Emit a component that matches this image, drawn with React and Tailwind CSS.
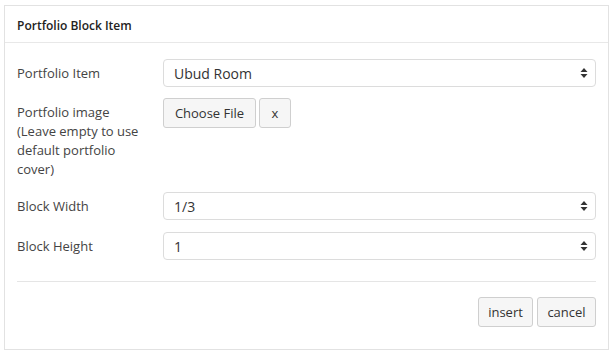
import React from "react";

const Arrows = () => (
    <svg width="8" height="12" viewBox="0 0 8 12" className="absolute right-[7px] top-1/2 -translate-y-1/2">
        <path d="M4 1 L7.5 5 L0.5 5 Z" fill="#333" />
        <path d="M4 11 L7.5 7 L0.5 7 Z" fill="#333" />
    </svg>
);

const SelectBox = ({ value }) => (
    <div className="relative flex-1 h-[28px] rounded-[4px] border border-[#dcdcdc] bg-white flex items-center pl-[10px] text-[14px] text-[#333]">
        {value}
        <Arrows />
    </div>
);

const Btn = ({ children, className = "" }) => (
    <button className={"h-[30px] pt-[1px] rounded-[3px] border border-[#cfcfcf] bg-[#f6f6f6] text-[13px] text-[#333] " + className}>
        {children}
    </button>
);

export default function App() {
    return (
        <div className="w-[613px] h-[355px] bg-white pt-[5px] pl-[4px]" style={{ fontFamily: '"Open Sans", sans-serif' }}>
            <div className="w-[605px] h-[345px] border border-[#e2e2e2]">
                {/* header */}
                <div className="h-[37px] border-b border-[#e8e8e8] flex items-center pt-[3px] px-[12px] text-[12px] font-semibold text-[#222]">
                    Portfolio Block Item
                </div>

                <div className="px-[12px] pt-[16px] text-[13px] text-[#444]">
                    <div className="flex items-center">
                        <div className="w-[146px] pt-[1px]">Portfolio Item</div>
                        <SelectBox value="Ubud Room" />
                    </div>

                    <div className="flex mt-[11px]">
                        <div className="w-[146px] pt-[5px]">
                            <div className="w-[128px] leading-[19px]">
                                Portfolio image (Leave empty to use default portfolio cover)
                            </div>
                        </div>
                        <div className="flex gap-[3px] items-start">
                            <Btn className="w-[93px]">Choose File</Btn>
                            <Btn className="w-[32px]">x</Btn>
                        </div>
                    </div>

                    <div className="flex items-center mt-[13px]">
                        <div className="w-[146px] pt-[1px]">Block Width</div>
                        <SelectBox value="1/3" />
                    </div>

                    <div className="flex items-center mt-[12px]">
                        <div className="w-[146px] pt-[1px]">Block Height</div>
                        <SelectBox value="1" />
                    </div>

                    <div className="border-t border-[#e5e5e5] mt-[21px]" />

                    <div className="flex justify-end gap-[4px] mt-[15px]">
                        <Btn className="w-[55px]">insert</Btn>
                        <Btn className="w-[59px]">cancel</Btn>
                    </div>
                </div>
            </div>
        </div>
    );
}
